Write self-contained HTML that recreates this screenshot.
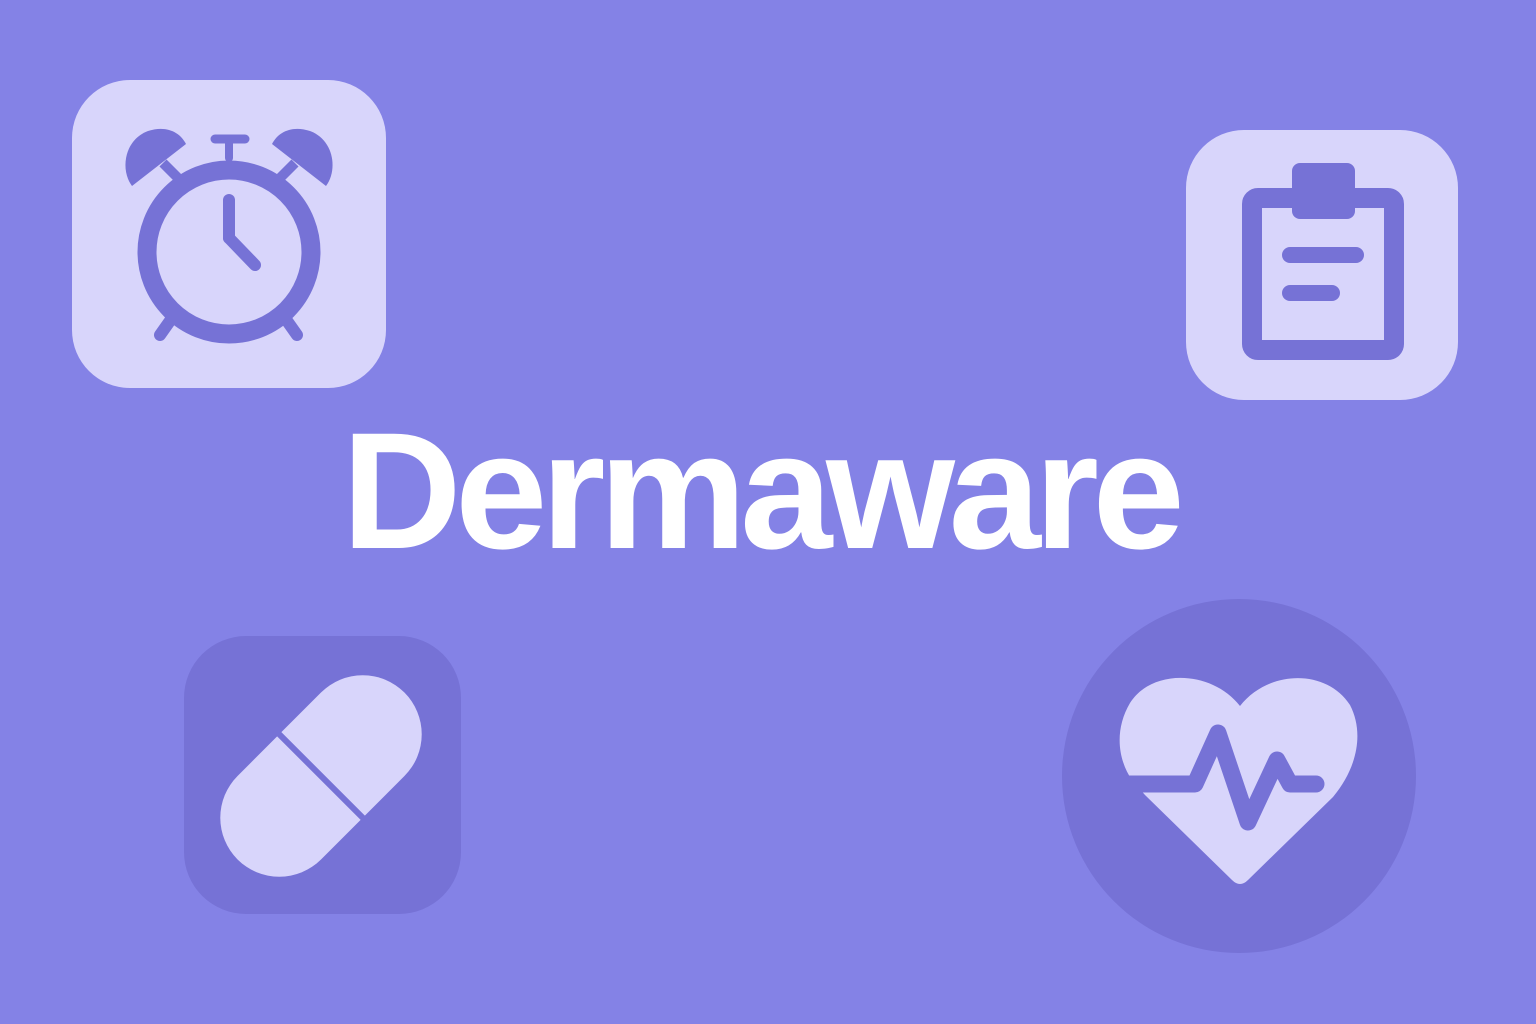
<!DOCTYPE html>
<html><head><style>
html,body{margin:0;padding:0;background:#8482e6;}
svg{display:block}
</style></head><body>
<svg width="1536" height="1024" viewBox="0 0 1536 1024" xmlns="http://www.w3.org/2000/svg">
<rect width="1536" height="1024" fill="#8482e6"/>
<!-- alarm tile -->
<rect x="72" y="80" width="314" height="308" rx="58" fill="#d8d5fb"/>
<g fill="none" stroke="#7672d6" stroke-linecap="round">
<circle cx="229" cy="252" r="82" stroke-width="19"/>
<line x1="229" y1="200" x2="229" y2="238" stroke-width="12"/>
<line x1="229" y1="238" x2="255" y2="265" stroke-width="12"/>
<line x1="160" y1="335" x2="172" y2="318" stroke-width="12"/>
<line x1="297" y1="335" x2="285" y2="318" stroke-width="12"/>
<line x1="215" y1="139" x2="245" y2="139" stroke-width="9"/>
<line x1="229" y1="139" x2="229" y2="158" stroke-width="8"/>
<line x1="163" y1="163" x2="178" y2="178" stroke-width="10" stroke-linecap="butt"/>
<line x1="295" y1="163" x2="280" y2="178" stroke-width="10" stroke-linecap="butt"/>
</g>
<path d="M132,186 C120,170 124,140 148,131 C166,125 180,132 186,144 Z" fill="#7672d6"/>
<path d="M326,186 C338,170 334,140 310,131 C292,125 278,132 272,144 Z" fill="#7672d6"/>
<!-- clipboard tile -->
<rect x="1186" y="130" width="272" height="270" rx="58" fill="#d8d5fb"/>
<rect x="1252" y="198" width="142" height="152" rx="6" fill="none" stroke="#7672d6" stroke-width="20"/>
<rect x="1292" y="163" width="63" height="56" rx="8" fill="#7672d6"/>
<g stroke="#7672d6" stroke-width="16" stroke-linecap="round">
<line x1="1290" y1="255" x2="1356" y2="255"/>
<line x1="1290" y1="293" x2="1332" y2="293"/>
</g>
<!-- pill tile -->
<rect x="184" y="636" width="277" height="278" rx="62" fill="#7672d6"/>
<g transform="rotate(-45 321 776)">
<rect x="203" y="717" width="236" height="118" rx="59" fill="#d8d5fb"/>
<line x1="321" y1="712" x2="321" y2="840" stroke="#7672d6" stroke-width="6"/>
</g>
<!-- heart circle -->
<circle cx="1239" cy="776" r="177" fill="#7672d6"/>
<path d="M1240,706 C1212,670 1152,668 1130,703 C1114,730 1118,760 1132,780 L1145,795 L1232,880 Q1240,888 1248,880 L1333,797 C1358,767 1364,732 1350,705 C1326,668 1268,670 1240,706 Z" fill="#d8d5fb"/>
<path d="M1118,784 L1195,784 L1218,733 L1248,822 L1277,760 L1290,784 L1316,784" fill="none" stroke="#7672d6" stroke-width="17" stroke-linecap="round" stroke-linejoin="round"/>
<text x="760" y="548" text-anchor="middle" font-family="Liberation Sans, sans-serif" font-weight="bold" font-size="166" letter-spacing="-6.5" fill="#ffffff">Dermaware</text>
</svg>
</body></html>
